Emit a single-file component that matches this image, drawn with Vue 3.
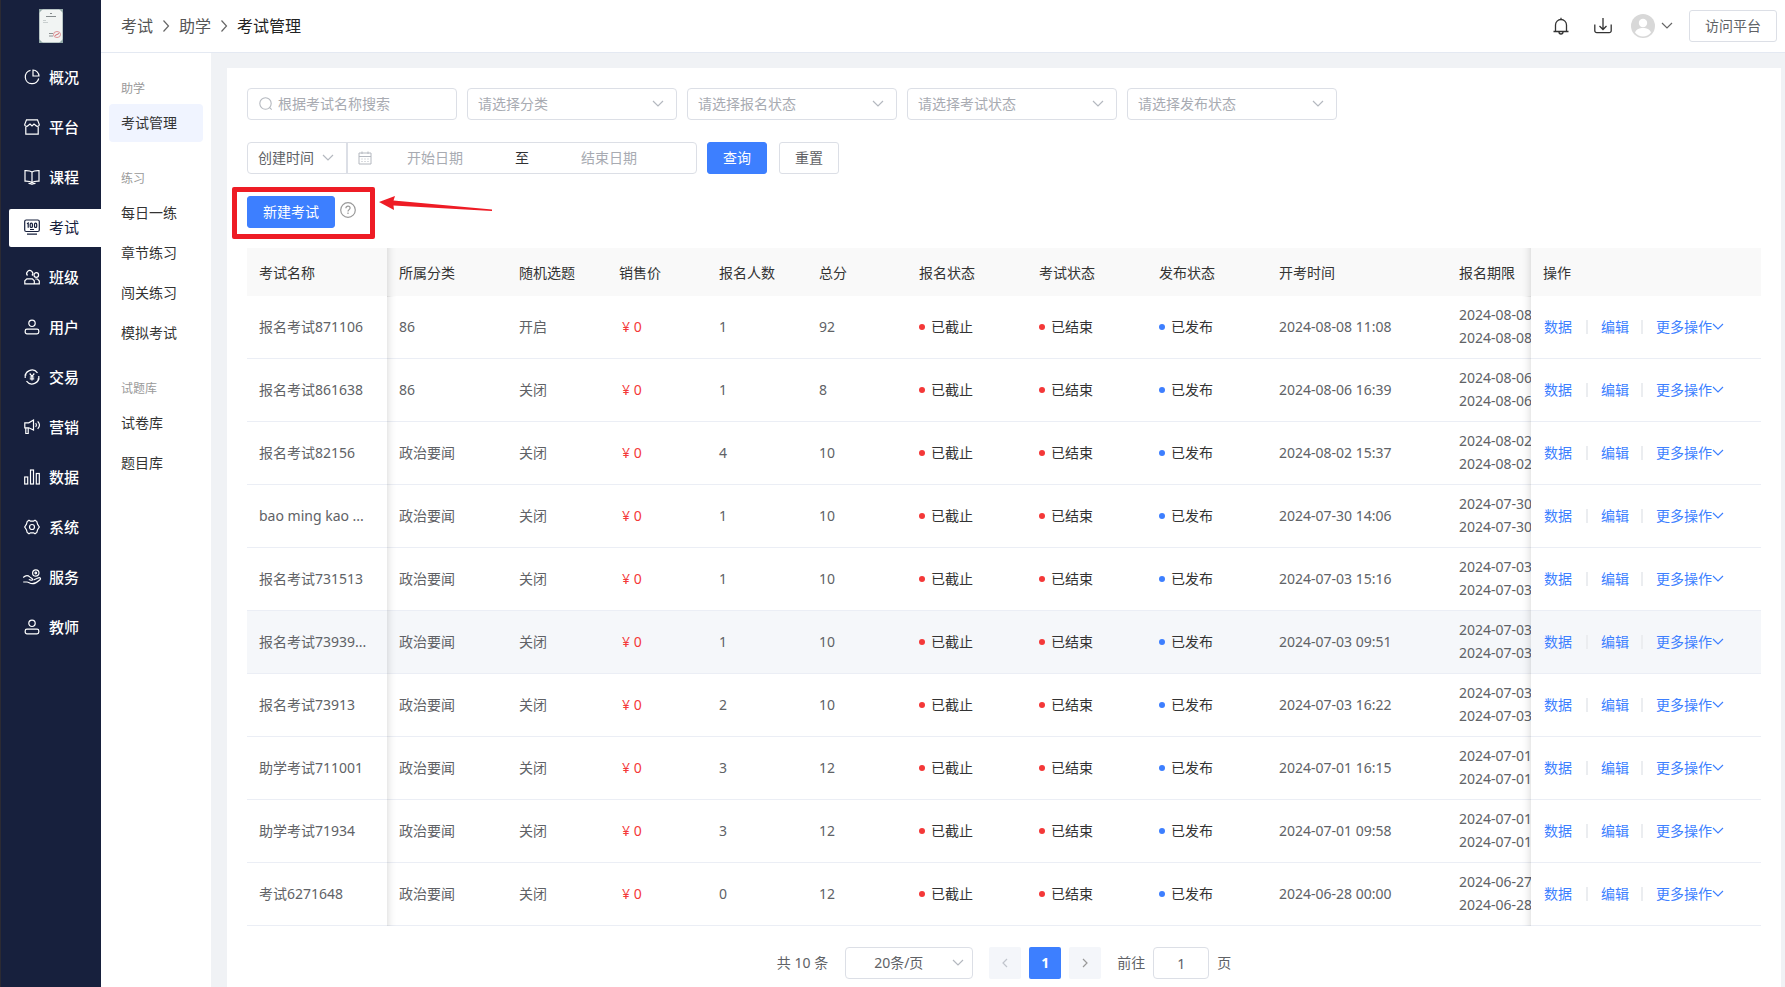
<script setup>
import { ref } from 'vue'

const navItems = [
  { label: '概况', icon: 'pie' },
  { label: '平台', icon: 'shop' },
  { label: '课程', icon: 'book' },
  { label: '考试', icon: 'exam', active: true },
  { label: '班级', icon: 'group' },
  { label: '用户', icon: 'user' },
  { label: '交易', icon: 'trade' },
  { label: '营销', icon: 'horn' },
  { label: '数据', icon: 'bars' },
  { label: '系统', icon: 'gear' },
  { label: '服务', icon: 'hand' },
  { label: '教师', icon: 'user' },
]

const subGroups = [
  { title: '助学', items: [{ label: '考试管理', active: true }] },
  { title: '练习', items: [{ label: '每日一练' }, { label: '章节练习' }, { label: '闯关练习' }, { label: '模拟考试' }] },
  { title: '试题库', items: [{ label: '试卷库' }, { label: '题目库' }] },
]

const filters = ['请选择分类', '请选择报名状态', '请选择考试状态', '请选择发布状态']
const columns = ['考试名称', '所属分类', '随机选题', '销售价', '报名人数', '总分', '报名状态', '考试状态', '发布状态', '开考时间', '报名期限', '操作']

const rows = [
  { name: '报名考试871106', cat: '86', random: '开启', count: 1, score: 92, time: '2024-08-08 11:08', from: '2024-08-08', to: '2024-08-08' },
  { name: '报名考试861638', cat: '86', random: '关闭', count: 1, score: 8, time: '2024-08-06 16:39', from: '2024-08-06', to: '2024-08-06' },
  { name: '报名考试82156', cat: '政治要闻', random: '关闭', count: 4, score: 10, time: '2024-08-02 15:37', from: '2024-08-02', to: '2024-08-02' },
  { name: 'bao ming kao ...', cat: '政治要闻', random: '关闭', count: 1, score: 10, time: '2024-07-30 14:06', from: '2024-07-30', to: '2024-07-30' },
  { name: '报名考试731513', cat: '政治要闻', random: '关闭', count: 1, score: 10, time: '2024-07-03 15:16', from: '2024-07-03', to: '2024-07-03' },
  { name: '报名考试73939...', cat: '政治要闻', random: '关闭', count: 1, score: 10, time: '2024-07-03 09:51', from: '2024-07-03', to: '2024-07-03', hover: true },
  { name: '报名考试73913', cat: '政治要闻', random: '关闭', count: 2, score: 10, time: '2024-07-03 16:22', from: '2024-07-03', to: '2024-07-03' },
  { name: '助学考试711001', cat: '政治要闻', random: '关闭', count: 3, score: 12, time: '2024-07-01 16:15', from: '2024-07-01', to: '2024-07-01' },
  { name: '助学考试71934', cat: '政治要闻', random: '关闭', count: 3, score: 12, time: '2024-07-01 09:58', from: '2024-07-01', to: '2024-07-01' },
  { name: '考试6271648', cat: '政治要闻', random: '关闭', count: 0, score: 12, time: '2024-06-28 00:00', from: '2024-06-27', to: '2024-06-28' },
]

const keyword = ref('')
const page = ref('1')
</script>

<template>
  <div class="layout">
    <aside class="sidebar">
      <svg class="logo" viewBox="0 0 24 34" aria-hidden="true">
        <rect width="24" height="34" fill="#b9c6c6" />
        <rect x="1" y="1" width="22" height="32" fill="#f1f4f3" />
        <path d="M0 0h4L0 4zM24 0v4l-4-4zM0 34v-4l4 4zM24 34h-4l4-4z" fill="#93a9a8" />
        <path d="M11 4.500h2M7 7.500h10" stroke="#858b8d" stroke-width="1" />
        <path d="M4 11.500h3M4 13.500h5" stroke="#c9cfcf" stroke-width="1" />
        <path d="M10 24.500h4M10 27h4" stroke="#8c9091" stroke-width="1" />
        <ellipse cx="18" cy="25.500" rx="3.500" ry="3" fill="none" stroke="#dc8f92" />
        <path d="M16 26.500l4-2" stroke="#d0656a" />
      </svg>
      <nav class="nav">
        <a v-for="item in navItems" :key="item.label" href="#" class="nav-item" :class="{ active: item.active }">
          <svg class="nav-icon" viewBox="0 0 16 16" aria-hidden="true">
            <g v-if="item.icon === 'pie'">
              <path d="M6.500 1.300A6.800 6.800 0 1 0 14.700 9.500" />
              <path d="M9 1v6h6A6.200 6.200 0 0 0 9 1z" />
            </g>
            <g v-else-if="item.icon === 'shop'">
              <path d="M2.500 .8h11l1.800 4.700c0 1.700-2 2.700-3.500 1L10 5 8 7 6 5 4.200 6.500C2.700 8.200.7 7.200.7 5.500z" />
              <path d="M1.800 8v7.200h12.400V8" />
            </g>
            <g v-else-if="item.icon === 'book'">
              <path d="M8 3C6.500 1.700 4 1.500 1 1.600v10.600c3-.1 5.500.1 7 1.500 1.500-1.400 4-1.600 7-1.500V1.600C12 1.500 9.500 1.700 8 3zM8 3v10" />
              <path d="M4.500 14.300c1.500.1 2.500.4 3.500 1 1-.6 2-.9 3.500-1" />
            </g>
            <g v-else-if="item.icon === 'exam'">
              <rect x=".7" y="1" width="14.600" height="11.500" rx="1.500" />
              <path d="M3 4.800l1.200-.8v4.700M6 10.500h4M3 15.200h10" />
              <rect x="6.200" y="4.200" width="2.200" height="4.200" rx="1" />
              <rect x="10.500" y="4.200" width="2.200" height="4.200" rx="1" />
            </g>
            <g v-else-if="item.icon === 'group'">
              <path d="M3.500 6.500a3 3 0 1 1 4.500 0" />
              <circle cx="12.300" cy="6" r="2.300" />
              <path d="M.8 14.800v-3l2-2h5.500l2 2v3zM11.300 10H13.500l1.800 2v2.800h-5" />
            </g>
            <g v-else-if="item.icon === 'user'">
              <circle cx="8" cy="4.300" r="3.200" />
              <rect x="1.200" y="10.200" width="13.600" height="4.600" rx="1.700" />
            </g>
            <g v-else-if="item.icon === 'trade'">
              <path d="M1.200 9A6.900 6.900 0 0 1 13.500 3.800M14.800 7A6.900 6.900 0 0 1 2.500 12.200M.5 6h2M13.500 10h2" />
              <path d="M5.700 4.500L8 7.300l2.300-2.800M8 7.300v4.300M5.800 8h4.400M5.800 9.800h4.400" />
            </g>
            <g v-else-if="item.icon === 'horn'">
              <path d="M.8 3.800h4L9.500 1v10L4.800 8.800H.8zM1.800 8.800v5.700h2.400V8.800M11.700 4c1 1.300 1 2.700 0 4M13.700 2.300c2.200 2.300 2.200 5.200 0 7.500" />
            </g>
            <g v-else-if="item.icon === 'bars'">
              <rect x=".7" y="8" width="3" height="7" />
              <rect x="6.500" y="1" width="3" height="14" />
              <rect x="12.300" y="4.500" width="3" height="10.500" />
            </g>
            <g v-else-if="item.icon === 'gear'">
              <path d="M5 1.200l1.500 1h3l1.500-1 1.800 1.300.8 2.800L15.300 8l-1.700 2.700-.8 2.800L11 14.800l-1.500-1h-3l-1.500 1-1.800-1.300-.8-2.800L.7 8l1.700-2.700.8-2.800z" />
              <circle cx="8" cy="8" r="2.500" />
            </g>
            <g v-else>
              <circle cx="11.800" cy="4" r="3.200" />
              <circle cx="11.800" cy="4" r=".8" />
              <path d="M-.8 8.500c2-1.800 4.700-2.300 6.500-.6L8 9.500c1.200 1 .2 2-1 1.700L4.800 10.500M9.500 11l5-2.200c1.700-.5 2.700.8 1.500 1.900-2 1.800-4 4-7.500 4-3 0-3.500-1.700-5.500-1.700H-.8" />
            </g>
          </svg>
          <span>{{ item.label }}</span>
        </a>
      </nav>
    </aside>

    <div class="page">
      <header class="topbar">
        <nav class="crumbs">
          <a href="#">考试</a>
          <svg viewBox="0 0 8 12" aria-hidden="true"><path d="M1.500 .5l5 5.500-5 5.500" /></svg>
          <a href="#">助学</a>
          <svg viewBox="0 0 8 12" aria-hidden="true"><path d="M1.500 .5l5 5.500-5 5.500" /></svg>
          <span class="current">考试管理</span>
        </nav>
        <div class="tools">
          <button class="icon-btn" aria-label="通知">
            <svg width="16" height="18" viewBox="0 0 16 18"><path d="M.5 14.500h15M2.500 14.500V8a5.500 5.500 0 0 1 11 0v6.500M8 2.500V.7M6 15a2 2 0 0 0 4 0" /></svg>
          </button>
          <button class="icon-btn" aria-label="下载">
            <svg width="18" height="18" viewBox="0 0 18 18"><path d="M.8 7.500v6.200a2 2 0 0 0 2 2h12.400a2 2 0 0 0 2-2V7.500M9 1v11M5.500 9L9 12.500 12.500 9" /></svg>
          </button>
          <button class="account" aria-label="账户">
            <svg width="24" height="24" viewBox="0 0 24 24">
              <circle cx="12" cy="12" r="12" fill="#d8d8d8" />
              <circle cx="12" cy="9" r="4.200" fill="#fff" />
              <path d="M4 18.500c1.500-3.500 4.500-4.500 8-4.500s6.500 1 8 4.500c-2 2.700-5 3.900-8 3.900s-6-1.200-8-3.900z" fill="#fff" />
            </svg>
            <svg class="chev dark" width="12" height="8" viewBox="0 0 12 8"><path d="M1 1l5 5 5-5" /></svg>
          </button>
          <button class="btn visit">访问平台</button>
        </div>
      </header>

      <div class="body">
        <nav class="submenu">
          <section v-for="group in subGroups" :key="group.title">
            <h2>{{ group.title }}</h2>
            <a v-for="item in group.items" :key="item.label" href="#" :class="{ active: item.active }">{{ item.label }}</a>
          </section>
        </nav>

        <main class="content">
          <div class="filters">
            <label class="field search">
              <svg width="14" height="14" viewBox="0 0 14 14" aria-hidden="true"><circle cx="6.500" cy="6.500" r="5.700" /><path d="M10.700 10.700l2 2" /></svg>
              <input v-model="keyword" type="text" placeholder="根据考试名称搜索" aria-label="考试名称" />
            </label>
            <div v-for="label in filters" :key="label" class="field">
              <select :aria-label="label"><option>{{ label }}</option></select>
              <svg class="chev" width="12" height="8" viewBox="0 0 12 8" aria-hidden="true"><path d="M1 1l5 5 5-5" /></svg>
            </div>
          </div>

          <div class="filters second">
            <div class="range">
              <div class="kind">
                <select aria-label="时间类型"><option>创建时间</option></select>
                <svg class="chev" width="12" height="8" viewBox="0 0 12 8" aria-hidden="true"><path d="M1 1l5 5 5-5" /></svg>
              </div>
              <div class="dates">
                <svg width="14" height="14" viewBox="0 0 14 14" aria-hidden="true"><path d="M1 2h12v11H1zM1 5.500h12M4 .5v2.500M10 .5v2.500M3.500 8h1M6.500 8h1M9.500 8h1M3.500 10.500h1M6.500 10.500h1M9.500 10.500h1" /></svg>
                <input type="text" placeholder="开始日期" aria-label="开始日期" />
                <span>至</span>
                <input type="text" placeholder="结束日期" aria-label="结束日期" />
              </div>
            </div>
            <button class="btn primary short">查询</button>
            <button class="btn short reset">重置</button>
          </div>

          <div class="create">
            <button class="btn primary">新建考试</button>
            <button class="help" aria-label="帮助">
              <svg width="16" height="16" viewBox="0 0 16 16"><circle cx="8" cy="8" r="7.300" /><path d="M5.900 6.300c0-1.300.9-2.100 2.100-2.100s2.100.8 2.100 1.900c0 1.500-2.100 1.600-2.100 3.300M8 10.600v1.400" /></svg>
            </button>
            <div class="mark"></div>
            <svg class="arrow" width="116" height="18" viewBox="0 0 116 18" aria-hidden="true"><path d="M1 6L17 0l-1.500 4.500L114 13.500v1.500L15.500 9.500 16 14z" /></svg>
          </div>

          <div class="table-wrap">
            <table>
              <colgroup>
                <col class="w140" /><col class="w120" /><col class="w100" /><col class="w100" /><col class="w100" /><col class="w100" />
                <col class="w120" /><col class="w120" /><col class="w120" /><col class="w180" /><col class="w180" /><col class="w230" />
              </colgroup>
              <thead>
                <tr><th v-for="c in columns" :key="c" scope="col">{{ c }}</th></tr>
              </thead>
              <tbody>
                <tr v-for="r in rows" :key="r.time" :class="{ hover: r.hover }">
                  <td>{{ r.name }}</td>
                  <td>{{ r.cat }}</td>
                  <td>{{ r.random }}</td>
                  <td class="price">¥ 0</td>
                  <td>{{ r.count }}</td>
                  <td>{{ r.score }}</td>
                  <td class="status"><i class="dot red"></i>已截止</td>
                  <td class="status"><i class="dot red"></i>已结束</td>
                  <td class="status"><i class="dot"></i>已发布</td>
                  <td>{{ r.time }}</td>
                  <td class="period">{{ r.from }}<br />{{ r.to }}</td>
                  <td>
                    <div class="ops">
                      <a href="#">数据</a>
                      <a href="#">编辑</a>
                      <a href="#">更多操作<svg class="chev" width="12" height="8" viewBox="0 0 12 8" aria-hidden="true"><path d="M1 1l5 5 5-5" /></svg></a>
                    </div>
                  </td>
                </tr>
              </tbody>
            </table>
          </div>

          <div class="pager">
            <span class="total">共 10 条</span>
            <div class="field size">
              <select aria-label="每页条数"><option>20条/页</option></select>
              <svg class="chev" width="12" height="8" viewBox="0 0 12 8" aria-hidden="true"><path d="M1 1l5 5 5-5" /></svg>
            </div>
            <button class="pg" aria-label="上一页"><svg width="8" height="10" viewBox="0 0 8 10"><path d="M6 1L2 5l4 4" /></svg></button>
            <button class="pg on">1</button>
            <button class="pg next" aria-label="下一页"><svg width="8" height="10" viewBox="0 0 8 10"><path d="M2 1l4 4-4 4" /></svg></button>
            <label class="jump">前往<input v-model="page" type="text" />页</label>
          </div>
        </main>
      </div>
    </div>
  </div>
</template>

<style>
body {
  background: #f0f2f5;
}
</style>

<style scoped>
* {
  box-sizing: border-box;
}
.layout {
  display: flex;
  min-height: 100vh;
  font-family: "Noto Sans", "Noto Sans CJK SC", sans-serif;
  font-size: 14px;
  line-height: 20px;
  color: #606266;
}
a {
  color: inherit;
  text-decoration: none;
}
svg {
  flex: none;
  display: block;
  overflow: visible;
}
button,
input,
select {
  font: inherit;
  color: inherit;
  margin: 0;
  padding: 0;
  border: 0;
  background: none;
  outline: 0;
}
.sidebar {
  flex: none;
  width: 101px;
  background: #17203d;
  border-left: 1px solid #2b2a33;
}
.logo {
  width: 24px;
  height: 34px;
  margin: 9px 0 16px 38px;
}
.nav {
  display: flex;
  flex-direction: column;
  gap: 12px;
}
.nav-item {
  display: flex;
  align-items: center;
  gap: 9px;
  height: 38px;
  margin-left: 8px;
  padding: 0 0 2px 15px;
  border-radius: 2px 0 0 2px;
  font-size: 15px;
  font-weight: 500;
  color: #fff;
}
.nav-item.active {
  background: #fff;
  color: #17203d;
  font-weight: 400;
}
.nav-icon {
  width: 16px;
  height: 16px;
  fill: none;
  stroke: currentColor;
  stroke-width: 1.2;
}
.page {
  flex: 1;
  min-width: 0;
  display: flex;
  flex-direction: column;
}
.topbar {
  display: flex;
  justify-content: space-between;
  align-items: center;
  height: 53px;
  padding: 0 8px 0 20px;
  background: #fff;
  border-bottom: 1px solid #e4e9f2;
}
.crumbs {
  display: flex;
  align-items: center;
  gap: 9px;
  font-size: 16px;
  line-height: 24px;
  color: #555;
}
.crumbs svg {
  width: 8px;
  height: 12px;
  fill: none;
  stroke: #666;
  stroke-width: 1.2;
}
.crumbs .current {
  color: #222;
}
.tools {
  display: flex;
  align-items: center;
}
.icon-btn {
  width: 18px;
  margin-right: 23px;
}
.icon-btn svg {
  fill: none;
  stroke: #333;
  stroke-width: 1.3;
}
.account {
  display: flex;
  align-items: center;
  gap: 6px;
  margin: 0 16px 0 -4px;
}
.btn {
  height: 32px;
  padding: 0 15px;
  border: 1px solid #dcdfe6;
  border-radius: 3px;
  background: #fff;
  white-space: nowrap;
}
.btn.primary {
  border-color: #3d7fff;
  background: #3d7fff;
  color: #fff;
}
.chev {
  fill: none;
  stroke: #b4b8bf;
  stroke-width: 1.2;
}
.chev.dark {
  stroke: #666;
}
.body {
  flex: 1;
  display: flex;
}
.submenu {
  flex: none;
  width: 110px;
  padding: 26px 8px 0;
  background: #fff;
  color: #333;
}
.submenu section {
  display: flex;
  flex-direction: column;
  gap: 2px;
  margin-bottom: 27px;
}
.submenu h2 {
  margin: 0 0 3px;
  padding-left: 12px;
  font-size: 12px;
  font-weight: 400;
  color: #999;
}
.submenu a {
  height: 38px;
  padding-left: 12px;
  border-radius: 4px;
  line-height: 38px;
}
.submenu a.active {
  background: #f0f4ff;
}
.content {
  flex: 1;
  min-width: 0;
  margin: 15px 4px 0 16px;
  padding: 20px 20px 0;
  background: #fff;
}
.filters {
  display: flex;
  gap: 10px;
}
.filters.second {
  margin-top: 22px;
}
.field {
  display: flex;
  align-items: center;
  position: relative;
  width: 210px;
  height: 32px;
  border: 1px solid #dcdfe6;
  border-radius: 4px;
  color: #a8abb2;
}
.search {
  gap: 5px;
  padding: 0 10px 0 11px;
}
.search svg {
  fill: none;
  stroke: #b4b8bf;
  stroke-width: 1.1;
}
.search input {
  flex: 1;
  min-width: 0;
  color: #606266;
}
input::placeholder {
  color: #a8abb2;
  opacity: 1;
}
select {
  appearance: none;
  width: 100%;
  height: 30px;
  padding-left: 10px;
}
.field .chev {
  position: absolute;
  right: 12px;
  pointer-events: none;
}
.range {
  display: flex;
  width: 450px;
  height: 32px;
  border: 1px solid #dcdfe6;
  border-radius: 4px;
}
.kind {
  flex: none;
  display: flex;
  align-items: center;
  position: relative;
  width: 100px;
  border-right: 2px solid #dcdfe6;
}
.kind .chev {
  position: absolute;
  right: 12px;
  pointer-events: none;
}
.dates {
  flex: 1;
  min-width: 0;
  display: flex;
  align-items: center;
  padding: 0 10px;
}
.dates > svg {
  fill: none;
  stroke: #b4b8bf;
}
.dates input {
  width: 126px;
  text-align: center;
}
.dates span {
  width: 48px;
  text-align: center;
  color: #303133;
}
.btn.short {
  width: 60px;
}
.reset {
  margin-left: 2px;
}
.create {
  display: flex;
  position: relative;
  width: 88px;
  margin: 22px 0 20px;
}
.help {
  position: absolute;
  left: 93px;
  top: 6px;
}
.help svg {
  fill: none;
  stroke: #999;
  stroke-width: 1.2;
}
.mark {
  position: absolute;
  left: -15px;
  top: -9px;
  width: 143px;
  height: 52px;
  border: 5px solid #ee1c25;
  border-radius: 2px;
  pointer-events: none;
}
.arrow {
  position: absolute;
  left: 131px;
  top: 0;
  fill: #ee1c25;
}
.table-wrap {
  overflow: hidden;
}
table {
  table-layout: fixed;
  width: 1610px;
  min-width: 100%;
  border-spacing: 0;
}
.w100 {
  width: 100px;
}
.w120 {
  width: 120px;
}
.w140 {
  width: 140px;
}
.w180 {
  width: 180px;
}
.w230 {
  width: 230px;
}
th {
  height: 48px;
  padding: 2px 12px 0;
  background: #f9f9f9;
  color: #333;
  font-weight: 400;
  text-align: left;
}
td {
  height: 63px;
  padding: 0 12px;
  background: #fff;
  border-bottom: 1px solid #ebeef5;
  white-space: nowrap;
}
.hover td {
  background: #f5f7fa;
}
th:first-child,
td:first-child {
  position: sticky;
  left: 0;
  z-index: 1;
}
th:last-child,
td:last-child {
  position: sticky;
  right: 0;
  z-index: 1;
}
th:first-child::after,
td:first-child::after,
th:last-child::before,
td:last-child::before {
  content: "";
  position: absolute;
  top: 0;
  bottom: -1px;
  width: 10px;
}
th:first-child::after,
td:first-child::after {
  left: 100%;
  box-shadow: inset 10px 0 10px -10px rgba(0, 0, 0, 0.18);
}
th:last-child::before,
td:last-child::before {
  right: 100%;
  box-shadow: inset -10px 0 10px -10px rgba(0, 0, 0, 0.18);
}
td.price {
  padding-left: 15px;
  color: #f43838;
}
.status {
  color: #333;
}
.dot {
  display: inline-block;
  width: 6px;
  height: 6px;
  margin-right: 6px;
  border-radius: 50%;
  background: #3d7fff;
  vertical-align: 2px;
}
.dot.red {
  background: #f43838;
}
td.period {
  padding-bottom: 2px;
  line-height: 23px;
}
.ops {
  display: flex;
  align-items: center;
  padding-left: 1px;
  color: #3d7fff;
}
.ops a {
  display: flex;
  align-items: center;
  line-height: 14px;
}
.ops a + a {
  margin-left: 14px;
  padding-left: 13px;
  border-left: 2px solid #ebedf0;
}
.ops a:last-child {
  margin-left: 12px;
}
.ops .chev {
  stroke: #3d7fff;
}
.pager {
  display: flex;
  justify-content: center;
  align-items: center;
  padding: 21px 0 8px;
}
.size {
  width: 128px;
  margin: 0 16px 0 17px;
  color: #606266;
}
.size select {
  padding: 0 30px 0 28px;
}
.size .chev {
  right: 8px;
}
.pg {
  display: flex;
  justify-content: center;
  align-items: center;
  width: 32px;
  height: 32px;
  margin-right: 8px;
  border-radius: 2px;
  background: #f4f6fa;
}
.pg svg {
  fill: none;
  stroke: #c0c4cc;
  stroke-width: 1.2;
}
.pg.next svg {
  stroke: #999;
}
.pg.on {
  background: #3d7fff;
  color: #fff;
  font-weight: 700;
}
.jump {
  display: flex;
  align-items: center;
  gap: 8px;
  margin-left: 8px;
}
.jump input {
  width: 56px;
  height: 32px;
  border: 1px solid #dcdfe6;
  border-radius: 4px;
  text-align: center;
}
</style>
